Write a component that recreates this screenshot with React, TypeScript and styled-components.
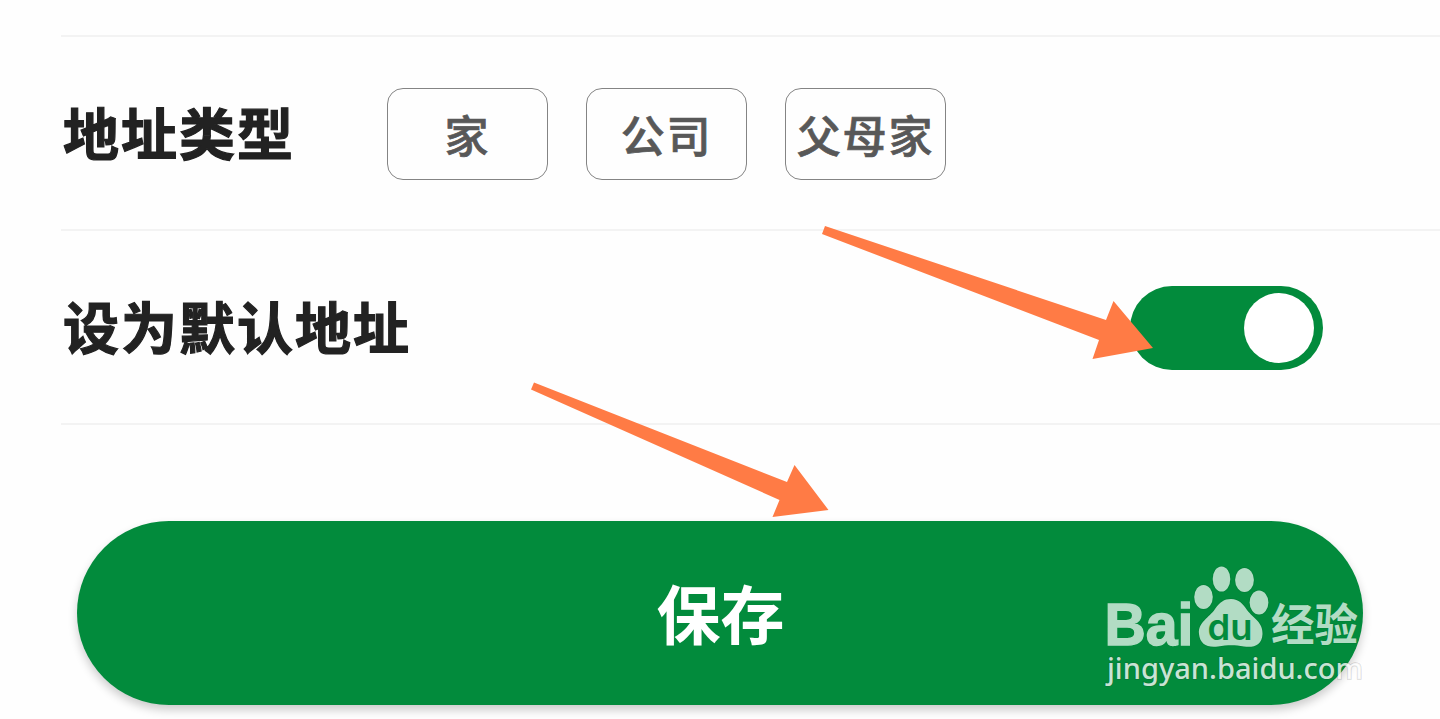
import React, { useState } from 'react';
import styled, { createGlobalStyle } from 'styled-components';

const GlobalStyle = createGlobalStyle`
    * {
        box-sizing: border-box;
    }
    body {
        margin: 0;
        overflow: hidden;
        background: #fefefe;
        font-family: "Noto Sans CJK SC", sans-serif;
    }
`
const Page = styled.main`
    position: relative;
    width: 1440px;
    height: 719px;
    overflow: hidden;
    padding-top: 35px;
`
const Form = styled.div`
    margin-left: 61px;
    border-top: 2px solid #f3f3f3;
`
const Row = styled.div`
    display: flex;
    align-items: center;
    height: 194px;
    padding: 2px 117px 0 2px;
    border-bottom: 2px solid #f3f3f3;
`
const Label = styled.span`
    width: 324px;
    flex: none;
    padding-bottom: 6px;
    white-space: nowrap;
    color: #222;
    font-size: 56px;
    line-height: 84px;
    font-weight: 700;
    letter-spacing: 2px;
    -webkit-text-stroke: 1.2px #222;
`
const Chips = styled.div`
    display: flex;
    gap: 38px;
`
const Chip = styled.button`
    width: 161px;
    height: 92px;
    padding: 0;
    border: 1px solid #848484;
    border-radius: 16px;
    background: transparent;
    color: #585858;
    font-family: inherit;
    font-size: 44px;
    line-height: 88px;
    font-weight: 500;
    letter-spacing: 1.8px;
    white-space: nowrap;
    -webkit-text-stroke: 0.7px #585858;
`
const Switch = styled.button<{ $on: boolean }>`
    display: flex;
    align-items: center;
    justify-content: ${({ $on }) => ($on ? 'flex-end' : 'flex-start')};
    width: 193px;
    height: 84px;
    margin-left: auto;
    padding: 0 9px;
    border: none;
    border-radius: 42px;
    background: ${({ $on }) => ($on ? '#028b3c' : '#ddd')};
`
const Knob = styled.span`
    width: 70px;
    height: 70px;
    border-radius: 50%;
    background: #fff;
`
const SaveButton = styled.button`
    display: block;
    width: 1286px;
    height: 184px;
    margin: 96px 0 0 77px;
    padding: 0 0 4px 1px;
    border: none;
    border-radius: 92px;
    background: #028b3c;
    box-shadow: 0 5px 10px rgba(0, 0, 0, 0.2);
    color: #fff;
    font-family: inherit;
    font-size: 64px;
    line-height: 176px;
    font-weight: 700;
`
const Overlay = styled.svg`
    position: absolute;
    top: 0;
    left: 0;
    pointer-events: none;
`

const types = ['家', '公司', '父母家'];

const Arrows = () => (
    <g fill="#ff7b45">
        <path d="M825 226 L1106 320 L1113.5 301 L1153 348 L1092.5 359 L1099 340 L822 234Z" />
        <path d="M534 382.5 L787 482 L794.5 465 L828.5 510 L772.5 517 L779.5 500 L531 389.5Z" />
    </g>
)

const Watermark = () => (
    <g fill="#b2dcc4" stroke="#004d20" strokeOpacity="0.14" strokeWidth="1.5" paintOrder="stroke">
        <text x="1104.5" y="644.5" stroke="#b2dcc4" strokeOpacity="1" strokeWidth="1.4" fontFamily="Liberation Sans, sans-serif" fontSize="60" fontWeight="700" textLength="89" lengthAdjust="spacingAndGlyphs">Bai</text>
        <ellipse cx="1203.5" cy="597" rx="9.3" ry="12" />
        <ellipse cx="1221.5" cy="579" rx="8.8" ry="12.6" />
        <ellipse cx="1244.5" cy="580" rx="9.4" ry="12" />
        <ellipse cx="1259" cy="602.5" rx="9.4" ry="12" />
        <path d="M1231 599 C1239 599 1243 604 1247 610 C1253 618 1263 622 1262.500 634 C1262 645 1254 648 1244 646.500 C1234 644.500 1227 645 1218 646.500 C1207 648 1200 644 1199 634 C1198 622 1209 618 1215 609 C1220 602 1224 599 1231 599Z" />
        <text x="1207.5" y="639.5" fill="#028b3c" stroke="none" fontFamily="Inter, sans-serif" fontSize="36" fontWeight="600" textLength="45" lengthAdjust="spacingAndGlyphs">du</text>
        <text x="1271" y="641" fontFamily="Noto Sans CJK SC, sans-serif" fontSize="44" fontWeight="700" textLength="87" lengthAdjust="spacingAndGlyphs">经验</text>
        <text x="1107" y="679" fill="#fff" fillOpacity="0.8" stroke="#222" strokeOpacity="0.18" fontFamily="Noto Sans, sans-serif" fontSize="29" fontWeight="500" textLength="256" lengthAdjust="spacingAndGlyphs">jingyan.baidu.com</text>
    </g>
)

const App = () => {
    const [isDefault, setIsDefault] = useState(true);
    return (
        <Page>
            <GlobalStyle />
            <Form>
                <Row>
                    <Label>地址类型</Label>
                    <Chips>
                        {types.map(type => <Chip key={type}>{type}</Chip>)}
                    </Chips>
                </Row>
                <Row>
                    <Label>设为默认地址</Label>
                    <Switch $on={isDefault} onClick={() => setIsDefault(!isDefault)}>
                        <Knob />
                    </Switch>
                </Row>
            </Form>
            <SaveButton>保存</SaveButton>
            <Overlay width="1440" height="719" viewBox="0 0 1440 719">
                <Arrows />
                <Watermark />
            </Overlay>
        </Page>
    );
};

export default App;
